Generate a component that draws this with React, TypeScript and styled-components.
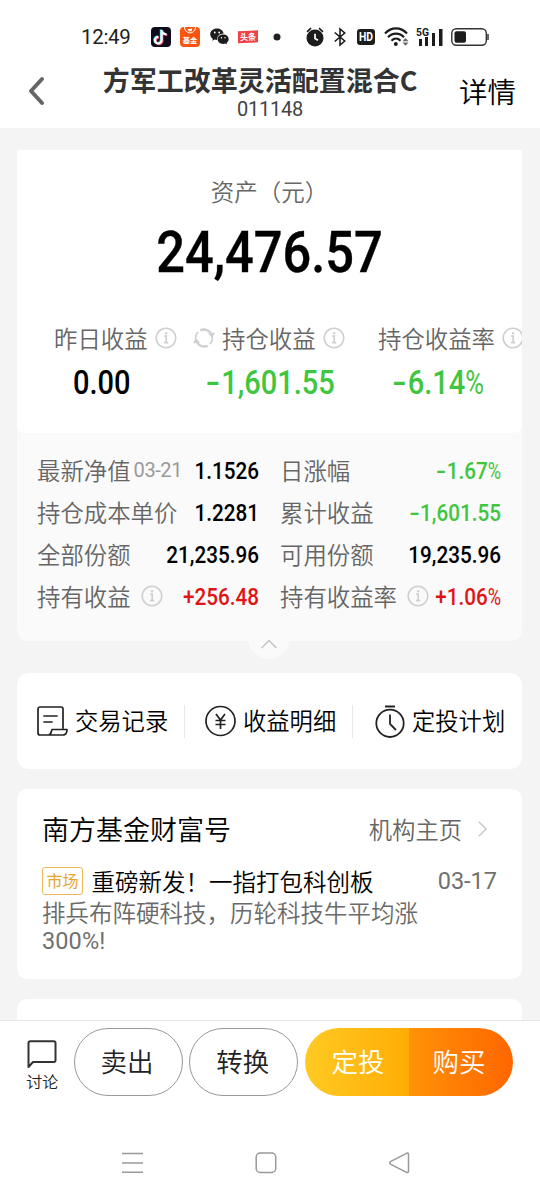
import React from "react";
import styled, { createGlobalStyle } from "styled-components";

const cjk = `"Noto Sans CJK SC", sans-serif`;
const latin = `Roboto, "Noto Sans CJK SC", sans-serif`;

const GlobalStyle = createGlobalStyle`
  * { box-sizing: border-box; }
  body { margin: 0; background: #fff; font-family: ${cjk}; font-weight: 350; }
  svg { display: block; flex: none; }
  button { font-family: inherit; font-weight: inherit; border: 0; background: none; padding: 0; margin: 0; }
`;

const Screen = styled.div`
  width: 540px;
  height: 1200px;
  display: flex;
  flex-direction: column;
  overflow: hidden;
  background: #f4f4f4;
`;

const StatusBar = styled.div`
  height: 56px;
  flex: none;
  background: #fff;
  display: flex;
  align-items: center;
  padding: 17px 0 0 81px;
`;

const Clock = styled.span`
  width: 70px;
  font: 400 20.5px/24px ${latin};
  color: #222;
  letter-spacing: -0.3px;
`;

const StatusSlot = styled.span<{ $after: number }>`
  margin-right: ${(p) => p.$after}px;
`;

const Header = styled.header`
  height: 72px;
  flex: none;
  background: #fff;
  display: grid;
  grid-template-columns: 100px 340px 100px;
`;

const BackButton = styled.button`
  padding: 20px 0 0 28px;
  display: flex;
`;

const TitleBlock = styled.div`
  display: flex;
  flex-direction: column;
  align-items: center;
`;

const Title = styled.h1`
  margin: 0;
  padding: 9px 20px 0 0;
  font: 700 27px/30px ${cjk};
  color: #333;
  white-space: nowrap;
`;

const Code = styled.div`
  margin-top: 3px;
  font: 400 20px/22px ${latin};
  color: #444;
  letter-spacing: -0.25px;
`;

const DetailLink = styled.button`
  font-size: 28.5px;
  line-height: 40px;
  color: #000;
  text-align: left;
  padding: 15px 0 0 19px;
  display: flex;
  white-space: nowrap;
`;

const Scroll = styled.main`
  height: 892px;
  flex: none;
  overflow: hidden;
  padding: 22px 18px 0 17px;
  display: flex;
  flex-direction: column;
`;

const AssetCard = styled.section`
  position: relative;
  height: 491px;
  flex: none;
  background: #fafafa;
  border-radius: 2px 2px 10px 10px;
`;

const AssetTop = styled.div`
  height: 283px;
  background: #fff;
  border-radius: 2px 2px 8px 8px;
  overflow: hidden;
`;

const AssetLabel = styled.div`
  padding-top: 23px;
  text-align: center;
  font-size: 23.5px;
  line-height: 36px;
  color: #666;
`;

const AssetValue = styled.div`
  text-align: center;
  font: 500 56.5px/66px ${latin};
  color: #000;
  margin-top: 11px;
  transform: scaleX(0.895);
  -webkit-text-stroke: 0.4px currentColor;
`;

const Metrics = styled.div`
  margin-top: 34px;
  height: 70px;
  display: grid;
  grid-template-columns: 169px 168px 168px;
`;

const Metric = styled.div`
  display: flex;
  flex-direction: column;
  align-items: center;
`;

const MetricLabel = styled.div<{ $start: number }>`
  align-self: flex-start;
  padding-left: ${(p) => p.$start}px;
  display: flex;
  align-items: center;
  height: 36px;
  gap: 7px;
  font-size: 23.4px;
  line-height: 36px;
  color: #666;
  white-space: nowrap;
`;

const tones = { plain: "#000", down: "#3fc63f", up: "#e01414" };
type Tone = keyof typeof tones;

const MetricValue = styled.div<{ $tone: Tone }>`
  font: 500 33px/40px ${latin};
  margin-top: 7px;
  color: ${(p) => tones[p.$tone]};
  transform: scaleX(0.88);
`;

const Minus = styled.span`
  display: inline-block;
  flex: none;
  width: 0.53em;
  transform: scaleX(1.45);
  transform-origin: left;
`;

const Percent = styled.span`
  display: inline-block;
  font-weight: 400;
  transform: scaleX(0.88);
  transform-origin: left;
  margin-right: -0.09em;
`;

const Details = styled.div`
  padding: 17px 21px 0 20px;
  display: grid;
  grid-template-columns: 222px 221px;
  column-gap: 21px;
  grid-auto-rows: 42px;
`;

const DetailRow = styled.div`
  display: flex;
  align-items: center;
  font-size: 23.4px;
  line-height: 36px;
  color: #666;
  white-space: nowrap;
`;

const DetailLabel = styled.span`
  margin-top: -2px;
`;

const DateNote = styled.span`
  font: 400 20px/36px ${latin};
  color: #999;
  margin: -2px 0 0 3px;
  letter-spacing: -0.4px;
`;

const InfoGap = styled.span`
  margin: -2px 0 0 10px;
`;

const DetailValue = styled.span<{ $tone: Tone }>`
  margin-left: auto;
  width: 0;
  display: flex;
  justify-content: flex-end;
  font: 500 23.5px/36px ${latin};
  color: ${(p) => tones[p.$tone]};
  transform: scaleX(0.88);
  transform-origin: right;
`;

const FoldHandle = styled.button`
  position: absolute;
  left: 231px;
  bottom: -18px;
  width: 42px;
  height: 42px;
  border-radius: 50%;
  background: #fafafa;
  display: flex;
  align-items: center;
  justify-content: center;
  padding-top: 12px;
`;

const Actions = styled.section`
  margin-top: 32px;
  height: 96px;
  flex: none;
  background: #fff;
  border-radius: 12px;
  display: flex;
  align-items: center;
`;

const Action = styled.button<{ $start: number }>`
  flex: 0 0 168px;
  height: 33px;
  padding-left: ${(p) => p.$start}px;
  display: flex;
  align-items: center;
  gap: 7px;
  font-size: 23.3px;
  line-height: 33px;
  color: #000;
  white-space: nowrap;
  & + & { border-left: 1px solid #e8e8e8; }
  &:first-child { flex-basis: 167px; }
`;

const ActionText = styled.span`
  margin-top: -1px;
`;

const NewsCard = styled.section`
  margin-top: 20px;
  height: 190px;
  flex: none;
  background: #fff;
  border-radius: 10px;
  padding: 20px 25px 0;
`;

const NewsHead = styled.div`
  height: 40px;
  display: flex;
  align-items: center;
  justify-content: space-between;
`;

const NewsName = styled.h2`
  margin: 0;
  font: 400 27px/40px ${cjk};
  font-weight: inherit;
  color: #000;
`;

const HomeLink = styled.button`
  display: flex;
  align-items: center;
  font-size: 23.3px;
  line-height: 36px;
  color: #666;
  gap: 16px;
  padding-right: 10px;
`;

const NewsRow = styled.div`
  margin-top: 15px;
  height: 34px;
  display: flex;
  align-items: center;
`;

const Tag = styled.span`
  width: 41px;
  height: 28px;
  border: 1px solid #e9b957;
  border-radius: 3px;
  color: #e5a52f;
  font-size: 16px;
  font-weight: 400;
  line-height: 25px;
  text-align: center;
  white-space: nowrap;
`;

const NewsTitle = styled.span`
  margin: -1px 0 0 8.5px;
  font-size: 23.5px;
  line-height: 34px;
  color: #000;
  white-space: nowrap;
`;

const NewsDate = styled.span`
  margin-left: auto;
  font: 400 23.5px/34px ${latin};
  color: #707070;
`;

const NewsText = styled.p`
  margin: 1px 0 0;
  font-size: 23.5px;
  line-height: 27px;
  color: #6a6a6a;
  width: 400px;
`;

const NewsFigure = styled.span`
  font-family: Roboto, sans-serif;
  font-weight: 400;
  color: #707070;
  letter-spacing: 0.1px;
`;

const NextCard = styled.section`
  margin-top: 20px;
  height: 60px;
  flex: none;
  background: #fff;
  border-radius: 10px;
`;

const BottomBar = styled.footer`
  height: 105px;
  flex: none;
  background: #fff;
  border-top: 1px solid #e8e8e8;
  display: flex;
  align-items: flex-start;
  padding: 7px 0 0 11px;
`;

const Discuss = styled.button`
  width: 62.5px;
  height: 67px;
  display: flex;
  flex-direction: column;
  align-items: center;
  padding-top: 12px;
  font-size: 16px;
  line-height: 20px;
  color: #222;
`;

const DiscussText = styled.span`
  margin-top: 2px;
`;

const OutlineButton = styled.button`
  width: 109px;
  height: 67.5px;
  margin-right: 6.75px;
  border: 1px solid #999;
  border-radius: 34px;
  font-size: 26.5px;
  line-height: 62px;
  padding: 0 2px 2px 0;
  color: #222;
`;

const BuyGroup = styled.div`
  width: 208px;
  height: 67.5px;
  border-radius: 34px;
  overflow: hidden;
  display: flex;
`;

const BuyButton = styled.button<{ $from: string; $to: string; $nudge: string }>`
  flex: 0 0 104px;
  background: linear-gradient(90deg, ${(p) => p.$from}, ${(p) => p.$to});
  color: #fff;
  font-size: 26.5px;
  line-height: 64px;
  padding: ${(p) => p.$nudge};
`;

const NavBar = styled.nav`
  flex: 1;
  background: #fff;
  display: flex;
  justify-content: space-between;
  padding: 27px 130px 0 121px;
`;

const InfoIcon = () => (
  <svg width="22" height="22" viewBox="0 0 22 22" fill="none" stroke="#d0d0d0">
    <circle cx="11" cy="11" r="9.8" strokeWidth="1.6" />
    <path d="M9.200 9.200h2V16M9 15.700h4.200" strokeWidth="1.700" />
    <path d="M10 6.200h2.200" strokeWidth="2" />
  </svg>
);

const RefreshIcon = () => (
  <svg width="22" height="20" viewBox="0 0 22 20" fill="none" stroke="#cfcfcf" strokeWidth="2.300">
    <path d="M7.300 2.300A8.300 8.300 0 0 1 18.800 7.500M14.700 17.700A8.300 8.300 0 0 1 3.200 12.500" />
    <path d="M2.900 12A8.300 8.300 0 0 1 5.300 3.900M19.100 8A8.300 8.300 0 0 1 16.700 16.100" strokeWidth="1.600" />
    <path d="M15 5.500l7-.8-2.700 5.300zM7 14.500l-7 .8L2.700 10z" fill="#cfcfcf" stroke="none" />
  </svg>
);

const TikTokIcon = () => (
  <svg width="20" height="20" viewBox="0 0 20 20" fill="none">
    <rect width="20" height="20" rx="4" fill="#0d0b1c" />
    <g strokeWidth="2.200">
      <path d="M10.600 3v10.200a3.300 3.300 0 1 1-3.300-3.300M10.600 3.300c.3 2.400 2 3.900 4.900 4.100" stroke="#27e5e5" transform="translate(-.7 -.4)" />
      <path d="M10.600 3v10.200a3.300 3.300 0 1 1-3.300-3.300M10.600 3.300c.3 2.400 2 3.900 4.900 4.100" stroke="#fb3b5c" transform="translate(.8 .6)" />
      <path d="M10.600 3v10.200a3.300 3.300 0 1 1-3.300-3.300M10.600 3.300c.3 2.400 2 3.900 4.900 4.100" stroke="#fff" />
    </g>
  </svg>
);

const FundIcon = () => (
  <svg width="20" height="20" viewBox="0 0 20 20">
    <rect width="20" height="20" rx="4" fill="#fb5310" />
    <path d="M4.500 0a5.500 6 0 0 0 11 0" fill="none" stroke="#fff" />
    <path d="M7.500 2l2 .3 2.800-1.300-.8 3.500-1.500-.5-1 .8z" fill="#fff" />
    <text x="10" y="15.800" textAnchor="middle" fill="#fff" fontSize="7.300" fontWeight="700" fontFamily="Noto Sans CJK SC">基金</text>
  </svg>
);

const WeChatIcon = () => (
  <svg width="19" height="17" viewBox="0 0 19 17" fill="#1c1c1c">
    <path d="M7 .5C3.100.5.200 3 .2 6.200c0 1.900 1 3.500 2.600 4.500l-.6 2.100 2.400-1.200c.8.200 1.600.3 2.500.3-.3-3.700 2.900-6.600 6.600-6.400C13 2.500 10.300.5 7 .5z" />
    <path d="M13.200 6.500c-3.200 0-5.600 2-5.600 4.700 0 2.600 2.400 4.700 5.600 4.700.7 0 1.300-.1 1.900-.3l1.900 1-.5-1.700c1.300-.9 2.200-2.200 2.200-3.700 0-2.700-2.400-4.700-5.500-4.700z" />
    <g fill="#fff"><circle cx="4.800" cy="4.500" r=".9" /><circle cx="9.200" cy="4.500" r=".9" /><circle cx="11.400" cy="9.800" r=".7" /><circle cx="15" cy="9.800" r=".7" /></g>
  </svg>
);

const NewsAppIcon = () => (
  <svg width="20" height="14" viewBox="0 0 20 14">
    <path d="M0 1.300L20 .3v12L0 13.300z" fill="#f04142" />
    <text x="10" y="10" textAnchor="middle" fill="#fff" fontSize="8" fontWeight="700" fontFamily="Noto Sans CJK SC">头条</text>
  </svg>
);

const DotIcon = () => (
  <svg width="8" height="8" viewBox="0 0 8 8"><circle cx="4" cy="4" r="3.500" fill="#222" /></svg>
);

const AlarmIcon = () => (
  <svg width="18" height="20" viewBox="0 0 18 20" fill="none" stroke="#1c1c1c">
    <circle cx="9" cy="11" r="8.500" fill="#1c1c1c" stroke="none" />
    <path d="M1 4.800L5 1.200M17 4.800L13 1.200" strokeWidth="1.700" />
    <path d="M9 6.800v4.700l3 1.700" stroke="#fff" strokeWidth="1.700" />
  </svg>
);

const BluetoothIcon = () => (
  <svg width="12" height="20" viewBox="0 0 12 20" fill="none" stroke="#1c1c1c" strokeWidth="1.600">
    <path d="M.7 5.500L10.700 14 6 18V2l4.700 4L.7 14.500" />
  </svg>
);

const HdIcon = () => (
  <svg width="18" height="16" viewBox="0 0 18 16">
    <rect width="18" height="16" rx="3" fill="#1c1c1c" />
    <text x="9" y="12.300" textAnchor="middle" fill="#fff" fontSize="12" fontWeight="700" fontFamily="Roboto" textLength="14" lengthAdjust="spacingAndGlyphs">HD</text>
  </svg>
);

const WifiIcon = () => (
  <svg width="25" height="19" viewBox="0 0 25 19" fill="none" stroke="#1c1c1c" strokeWidth="2.200">
    <path d="M1 6.500C7.500-.3 16.500-.3 23 6.500M4 10.200c4.500-4.800 11.500-4.800 16 0M7.500 13.700c2.700-2.700 6.300-2.700 9 0" />
    <circle cx="11.800" cy="17" r="2" fill="#1c1c1c" stroke="none" />
    <path d="M18.500 14.300L21.500 11l3 3.300zM18.500 15.500h6l-3 3.300z" fill="#666" stroke="none" />
  </svg>
);

const SignalIcon = () => (
  <svg width="28" height="20" viewBox="0 0 28 20" fill="#1c1c1c">
    <text x="0" y="9" fontSize="11" fontWeight="700" fontFamily="Roboto" textLength="13" lengthAdjust="spacingAndGlyphs">5G</text>
    <path d="M3 12h3v7H3zM9 10h3v9H9zM16 6h3v13h-3zM23 2h3.500v17H23z" />
  </svg>
);

const BatteryIcon = () => (
  <svg width="38" height="18" viewBox="0 0 38 18" fill="none">
    <rect x=".8" y=".8" width="34.500" height="16.400" rx="4.500" stroke="#333" strokeWidth="1.400" />
    <rect x="3.500" y="3.300" width="11.500" height="11.400" rx="2" fill="#1c1c1c" />
    <path d="M37 6v6" stroke="#333" strokeWidth="1.500" />
  </svg>
);

const BackIcon = () => (
  <svg width="17" height="30" viewBox="0 0 17 30" fill="none" stroke="#666" strokeWidth="4" strokeLinecap="round" strokeLinejoin="round">
    <path d="M14 3L3 15l11 12" />
  </svg>
);

const ChevronUp = () => (
  <svg width="16" height="10" viewBox="0 0 16 10" fill="none" stroke="#c4c4c4" strokeWidth="1.500">
    <path d="M.5 9L8 1.500 15.500 9" />
  </svg>
);

const ChevronRight = () => (
  <svg width="9" height="16" viewBox="0 0 9 16" fill="none" stroke="#ccc" strokeWidth="1.600">
    <path d="M.8.8L8 8 .8 15.200" />
  </svg>
);

const RecordIcon = () => (
  <svg width="31" height="30" viewBox="0 0 31 30" fill="none" stroke="#222" strokeWidth="1.700" strokeLinejoin="round" strokeLinecap="round">
    <path d="M26 22V3a2 2 0 0 0-2-2H3a2 2 0 0 0-2 2v24a2 2 0 0 0 2 2h8.500c2 0 2.500-1.500 2.800-3.500L15 23.500h15c0 3.500-1.500 5.500-4 5.500H11" />
    <path d="M7 10h13M7 16h8" />
  </svg>
);

const YenIcon = () => (
  <svg width="32" height="32" viewBox="0 0 32 32" fill="none" stroke="#222" strokeWidth="1.700">
    <circle cx="16.500" cy="16" r="14.500" />
    <path d="M12 9l4.500 6 4.500-6M16.500 15v9M11.500 15.500h10M11.500 19.500h10" />
  </svg>
);

const TimerIcon = () => (
  <svg width="30" height="33" viewBox="0 0 30 33" fill="none" stroke="#222" strokeWidth="1.800">
    <circle cx="15" cy="18.300" r="13.700" />
    <path d="M10 1.500h10" strokeWidth="2" />
    <path d="M15 9.500v9.500l6 6" />
  </svg>
);

const BubbleIcon = () => (
  <svg width="30" height="29" viewBox="0 0 30 29" fill="none" stroke="#333" strokeWidth="2" strokeLinejoin="round">
    <path d="M1.500 27V3a1.700 1.700 0 0 1 1.700-1.700h23.600A1.700 1.700 0 0 1 28.500 3v17.300a1.700 1.700 0 0 1-1.700 1.700H6z" />
  </svg>
);

const MenuIcon = () => (
  <svg width="22" height="22" viewBox="0 0 22 22" stroke="#999" strokeWidth="1.500">
    <path d="M1 1.500h21M1 11h21M1 20.300h21" />
  </svg>
);

const HomeIcon = () => (
  <svg width="22" height="22" viewBox="0 0 22 22" fill="none" stroke="#999" strokeWidth="1.500">
    <rect x="1.200" y="1" width="19.500" height="19.500" rx="4" />
  </svg>
);

const ReturnIcon = () => (
  <svg width="21" height="22" viewBox="0 0 21 22" fill="none" stroke="#999" strokeWidth="1.500" strokeLinejoin="round">
    <path d="M1.900 9.300L17.500 1.300c1.300-.6 2 0 2 1v17c0 1-.7 1.600-2 1L1.900 12.300c-1.600-.9-1.600-2.100 0-3z" />
  </svg>
);

const statusIcons: { icon: React.ReactNode; after: number }[] = [
  { icon: <TikTokIcon />, after: 9 },
  { icon: <FundIcon />, after: 10 },
  { icon: <WeChatIcon />, after: 9 },
  { icon: <NewsAppIcon />, after: 15 },
  { icon: <DotIcon />, after: 25 },
  { icon: <AlarmIcon />, after: 10 },
  { icon: <BluetoothIcon />, after: 11 },
  { icon: <HdIcon />, after: 9 },
  { icon: <WifiIcon />, after: 7 },
  { icon: <SignalIcon />, after: 7 },
  { icon: <BatteryIcon />, after: 0 },
];

const details: { label: string; value: string; tone: Tone; date?: string; info?: boolean }[] = [
  { label: "最新净值", date: "03-21", value: "1.1526", tone: "plain" },
  { label: "日涨幅", value: "-1.67%", tone: "down" },
  { label: "持仓成本单价", value: "1.2281", tone: "plain" },
  { label: "累计收益", value: "-1,601.55", tone: "down" },
  { label: "全部份额", value: "21,235.96", tone: "plain" },
  { label: "可用份额", value: "19,235.96", tone: "plain" },
  { label: "持有收益", info: true, value: "+256.48", tone: "up" },
  { label: "持有收益率", info: true, value: "+1.06%", tone: "up" },
];

const Figure = ({ value }: { value: string }) => (
  <>
    {value.startsWith("-") && <Minus>-</Minus>}
    <span>{value.replace(/^-|%$/g, "")}</span>
    {value.endsWith("%") && <Percent>%</Percent>}
  </>
);

export default function App() {
  return (
    <Screen>
      <GlobalStyle />
      <StatusBar>
        <Clock>12:49</Clock>
        {statusIcons.map((s, i) => (
          <StatusSlot key={i} $after={s.after}>{s.icon}</StatusSlot>
        ))}
      </StatusBar>
      <Header>
        <BackButton aria-label="返回"><BackIcon /></BackButton>
        <TitleBlock>
          <Title>方军工改革灵活配置混合C</Title>
          <Code>011148</Code>
        </TitleBlock>
        <DetailLink>详情</DetailLink>
      </Header>
      <Scroll>
        <AssetCard>
          <AssetTop>
            <AssetLabel>资产（元）</AssetLabel>
            <AssetValue>24,476.57</AssetValue>
            <Metrics>
              <Metric>
                <MetricLabel $start={37}>昨日收益<InfoIcon /></MetricLabel>
                <MetricValue $tone="plain">0.00</MetricValue>
              </Metric>
              <Metric>
                <MetricLabel $start={7}><RefreshIcon />持仓收益<InfoIcon /></MetricLabel>
                <MetricValue $tone="down"><Figure value="-1,601.55" /></MetricValue>
              </Metric>
              <Metric>
                <MetricLabel $start={24}>持仓收益率<InfoIcon /></MetricLabel>
                <MetricValue $tone="down"><Figure value="-6.14%" /></MetricValue>
              </Metric>
            </Metrics>
          </AssetTop>
          <Details>
            {details.map((d) => (
              <DetailRow key={d.label}>
                <DetailLabel>{d.label}</DetailLabel>
                {d.date && <DateNote>{d.date}</DateNote>}
                {d.info && <InfoGap><InfoIcon /></InfoGap>}
                <DetailValue $tone={d.tone}><Figure value={d.value} /></DetailValue>
              </DetailRow>
            ))}
          </Details>
          <FoldHandle aria-label="收起"><ChevronUp /></FoldHandle>
        </AssetCard>
        <Actions>
          <Action $start={20}><RecordIcon /><ActionText>交易记录</ActionText></Action>
          <Action $start={19}><YenIcon /><ActionText>收益明细</ActionText></Action>
          <Action $start={22}><TimerIcon /><ActionText>定投计划</ActionText></Action>
        </Actions>
        <NewsCard>
          <NewsHead>
            <NewsName>南方基金财富号</NewsName>
            <HomeLink>机构主页<ChevronRight /></HomeLink>
          </NewsHead>
          <NewsRow>
            <Tag>市场</Tag>
            <NewsTitle>重磅新发！一指打包科创板</NewsTitle>
            <NewsDate>03-17</NewsDate>
          </NewsRow>
          <NewsText>排兵布阵硬科技，历轮科技牛平均涨<NewsFigure>300%!</NewsFigure></NewsText>
        </NewsCard>
        <NextCard />
      </Scroll>
      <BottomBar>
        <Discuss><BubbleIcon /><DiscussText>讨论</DiscussText></Discuss>
        <OutlineButton>卖出</OutlineButton>
        <OutlineButton>转换</OutlineButton>
        <BuyGroup>
          <BuyButton $from="#ffca22" $to="#ffad05" $nudge="0 0 2px 2px">定投</BuyButton>
          <BuyButton $from="#ff9206" $to="#ff6600" $nudge="0 4px 2px 0">购买</BuyButton>
        </BuyGroup>
      </BottomBar>
      <NavBar>
        <MenuIcon />
        <HomeIcon />
        <ReturnIcon />
      </NavBar>
    </Screen>
  );
}
